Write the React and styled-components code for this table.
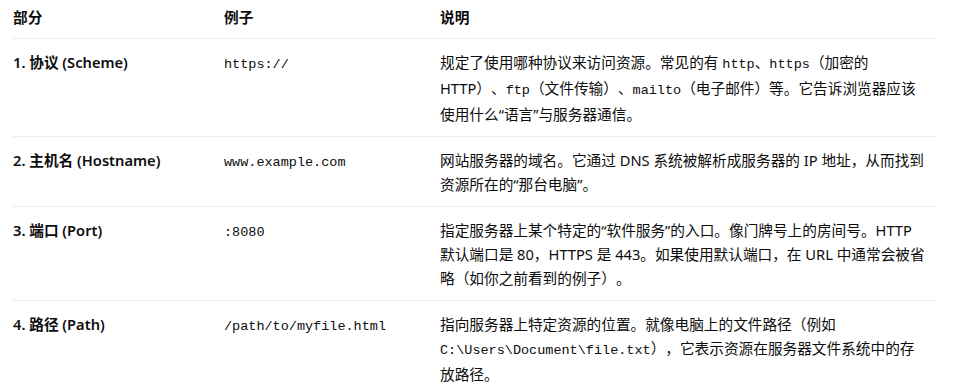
import React from "react";
import styled, { createGlobalStyle } from "styled-components";

const Global = createGlobalStyle`
  html, body { margin: 0; padding: 0; background: #ffffff; }
  body {
    font-family: "Noto Sans", "Noto Sans CJK SC", sans-serif;
    color: #0d0d0d;
  }
`;

const Page = styled.div`
  padding: 0 21px 0 13px;
`;

const Table = styled.div`
  display: grid;
  grid-template-columns: 211px 216px 1fr;
  font-size: 14.67px;
  line-height: 24px;
  text-spacing-trim: space-all;
`;

const Cell = styled.div`
  padding: ${(p) => (p.$head ? "5px 0 9px" : "11px 0 10px")};
  padding-right: ${(p) => (p.$desc ? "6px" : "12px")};
  border-bottom: 1px solid ${(p) => (p.$last ? "transparent" : "#ececec")};
  font-weight: ${(p) => (p.$head ? 700 : p.$bold ? 600 : 400)};
`;

const Code = styled.code`
  font-family: "Liberation Mono", "DejaVu Sans Mono", monospace;
  font-size: 13.5px;
  line-height: 22px;
`;

const rows = [
  {
    part: "1. 协议 (Scheme)",
    ex: "https://",
    desc: (
      <>
        规定了使用哪种协议来访问资源。常见的有 <Code>http</Code>、<Code>https</Code>（加密的
        HTTP）、<Code>ftp</Code>（文件传输）、<Code>mailto</Code>（电子邮件）等。它告诉浏览器应该使用什么“语言”与服务器通信。
      </>
    ),
  },
  {
    part: "2. 主机名 (Hostname)",
    ex: "www.example.com",
    desc: <>网站服务器的域名。它通过 DNS 系统被解析成服务器的 IP 地址，从而找到资源所在的“那台电脑”。</>,
  },
  {
    part: "3. 端口 (Port)",
    ex: ":8080",
    desc: (
      <>
        指定服务器上某个特定的“软件服务”的入口。像门牌号上的房间号。HTTP 默认端口是 80，HTTPS 是 443。如果使用默认端口，在 URL 中通常会被省略（如你之前看到的例子）。
      </>
    ),
  },
  {
    part: "4. 路径 (Path)",
    ex: "/path/to/myfile.html",
    desc: (
      <>
        指向服务器上特定资源的位置。就像电脑上的文件路径（例如 <Code>C:\Users\Document\file.txt</Code>），它表示资源在服务器文件系统中的存放路径。
      </>
    ),
  },
];

export default function App() {
  return (
    <Page>
      <Global />
      <Table>
        <Cell $head>部分</Cell>
        <Cell $head>例子</Cell>
        <Cell $head $desc>说明</Cell>
        {rows.map((r, i) => {
          const last = i === rows.length - 1;
          return (
            <React.Fragment key={i}>
              <Cell $bold $last={last}>{r.part}</Cell>
              <Cell $last={last}><Code>{r.ex}</Code></Cell>
              <Cell $desc $last={last}>{r.desc}</Cell>
            </React.Fragment>
          );
        })}
      </Table>
    </Page>
  );
}
